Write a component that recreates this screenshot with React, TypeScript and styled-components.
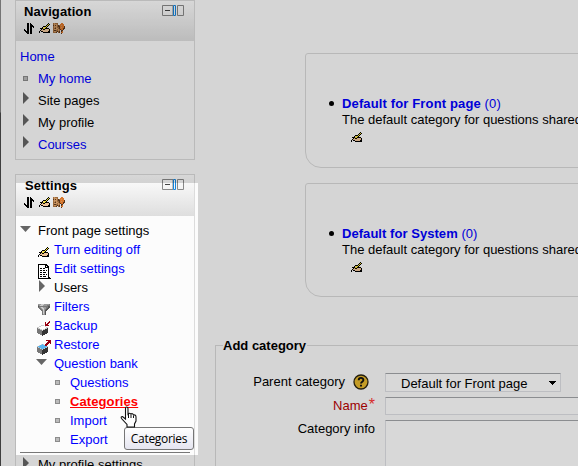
import React from 'react';
import styled, { createGlobalStyle } from 'styled-components';

const GlobalStyle = createGlobalStyle`
  html, body { margin: 0; padding: 0; height: 100%; overflow: hidden; }
  *, *::before, *::after { box-sizing: border-box; }
`;

const Page = styled.div`
  position: relative;
  display: flex;
  gap: 20px;
  width: 100%;
  height: 100vh;
  overflow: hidden;
  background: #fcfcfc;
  color: #000;
  font: 13px/15px 'Liberation Sans', Arial, sans-serif;
  white-space: nowrap;
`;

const Sidebar = styled.div`
  display: flex;
  flex: none;
  flex-direction: column;
  gap: 14px;
  width: 195px;
  padding-left: 14px;
  border-left: 1px solid;
  border-image: linear-gradient(#8a8a8a 0, #858585 112px, #4a4a4a 114px, #4a4a4a 100%) 1;
`;

const Block = styled.section<{ $height: number }>`
  flex: none;
  width: 180px;
  height: ${p => p.$height}px;
  border: 1px solid #dcdcdc;
`;

const BlockHeader = styled.header<{ $height: number }>`
  display: flex;
  justify-content: space-between;
  height: ${p => p.$height}px;
  padding: 3px 10px 0 8px;
  background: linear-gradient(#fefefe, #f3f3f3 35%, #dedede);
`;

const BlockTitle = styled.h2<{ $indent?: number }>`
  margin: 0 0 4px ${p => p.$indent || 0}px;
  font-size: 13px;
  line-height: 15px;
  letter-spacing: 0.1px;
`;

const Commands = styled.div`
  display: flex;
  gap: 3px;
  height: 12px;
`;

const Toggle = styled.svg`
  flex: none;
  margin-top: 1px;
`;

const Tree = styled.ul<{ $pad: number }>`
  margin: 0;
  padding: ${p => p.$pad}px 0 0;
  list-style: none;
`;

const TreeRow = styled.li<{ $height: number; $indent: number }>`
  display: flex;
  align-items: center;
  height: ${p => p.$height}px;
  padding-left: ${p => p.$indent}px;
`;

const IconSlot = styled.span<{ $width: number; $drop?: number }>`
  display: flex;
  flex: none;
  align-items: center;
  width: ${p => p.$width}px;
  height: 15px;
  padding-top: ${p => p.$drop || 0}px;
`;

const Label = styled.span<{ $link?: boolean; $active?: boolean }>`
  color: ${p => (p.$active ? '#f00' : p.$link ? '#00f' : '#000')};
  font-weight: ${p => (p.$active ? 'bold' : 'normal')};
  letter-spacing: ${p => (p.$active ? '0.1px' : 'normal')};
  text-decoration: ${p => (p.$active ? 'underline' : 'none')};
`;

const Rule = styled.li`
  height: 1px;
  margin: 3px 4px 2px;
  background: #777;
`;

const Square = styled.i`
  width: 5px;
  height: 5px;
  background: #bbb;
  border: 1px solid #8c8c8c;
`;

const Arrow = styled.svg<{ $lift: number }>`
  flex: none;
  margin-bottom: ${p => p.$lift}px;
`;

const Main = styled.main`
  flex: 1;
  min-width: 0;
  padding-top: 53px;
`;

const CategoryBox = styled.section<{ $height: number; $after: number }>`
  width: 320px;
  height: ${p => p.$height}px;
  margin: 0 0 ${p => p.$after}px 90px;
  padding: 42px 0 0 36px;
  border: 1px solid #dadada;
  border-radius: 3px 3px 3px 16px;
`;

const CategoryTitle = styled.div<{ $spacing: number }>`
  position: relative;
  height: 16px;
  color: #00f;
  letter-spacing: ${p => p.$spacing}px;
  &::before {
    content: '';
    position: absolute;
    left: -13px;
    top: 5px;
    width: 5px;
    height: 5px;
    border-radius: 50%;
    background: #000;
  }
`;

const CategoryText = styled.div`
  height: 20px;
`;

const EditLink = styled.div`
  padding-left: 9px;
  line-height: 0;
`;

const Form = styled.fieldset`
  width: 450px;
  height: 200px;
  min-width: 0;
  margin: 0;
  padding: 20px 0 0;
  border: 1px solid #dadada;
`;

const Legend = styled.legend`
  height: 15px;
  margin-left: 7px;
  padding: 0 1px 0 0;
  font-weight: bold;
`;

const Field = styled.div<{ $height: number }>`
  display: flex;
  gap: 10px;
  height: ${p => p.$height}px;
`;

const FieldLabel = styled.label<{ $required?: boolean; $right?: number }>`
  display: flex;
  flex: none;
  gap: ${p => (p.$required ? 1 : 8)}px;
  justify-content: flex-end;
  width: 159px;
  padding-right: ${p => p.$right || 0}px;
  padding-top: 1px;
  color: ${p => (p.$required ? '#b80000' : '#000')};
`;

const Star = styled.span`
  margin-top: -1px;
  color: #f33;
  font-size: 16px;
`;

const Control = styled.div<{ $width: number; $height: number }>`
  display: flex;
  flex: none;
  align-items: center;
  justify-content: space-between;
  width: ${p => p.$width}px;
  height: ${p => p.$height}px;
  padding: 1px 4px 0 15px;
  border: 1px solid #dfe1e6;
  border-top-color: #a5a7ab;
  border-radius: 1px;
  background: #fff;
`;

/* Leaves the settings block lit and shades the rest of the page. */
const Spotlight = styled.div`
  position: absolute;
  left: 16px;
  top: 183px;
  width: 182px;
  height: 272px;
  box-shadow: 0 0 0 1000px rgba(0, 0, 0, 0.152);
`;

const Tooltip = styled.div`
  position: absolute;
  left: 124px;
  top: 427px;
  width: 70px;
  height: 23px;
  border: 1px solid #767676;
  border-radius: 3px;
  background: linear-gradient(#fff, #e5e5f0);
  font: 12px/21px 'Open Sans', sans-serif;
  letter-spacing: -0.3px;
  text-align: center;
`;

const Pointer = styled.svg`
  position: absolute;
  left: 119px;
  top: 406px;
`;

const PALETTE: Record<string, string> = {
  K: '#000', Y: '#f2e23a', P: '#eec49a', B: '#9c6a3c', C: '#c99563',
  D: '#55351c', O: '#d9772c', W: '#fff', G: '#777', S: '#555',
  L: '#ccc', M: '#999', R: '#970010', U: '#59b5f0', N: '#333',
};

const Pixels = ({ rows }: { rows: string[] }) => (
  <svg width={rows[0].length} height={rows.length} shapeRendering="crispEdges">
    {rows.flatMap((row, y) =>
      [...row].map((c, x) =>
        PALETTE[c] ? <rect key={`${x}-${y}`} x={x} y={y} width="1" height="1" fill={PALETTE[c]} /> : null,
      ),
    )}
  </svg>
);

const MOVE = [
  '...KK.K.....',
  '...KK.KK....',
  '...KK.KKK...',
  '...KK.KKKK..',
  '...KK.KK.K..',
  '...KK.KK....',
  'K..KK.KK....',
  'KK.KK.KK....',
  '.KKKK.KK....',
  '..KKK.KK....',
  '...KK.KK....',
];
const HAND = [
  '.........K.',
  '........KYK',
  '.......KYK.',
  '....KKKYK..',
  '...KPYYK...',
  '.KKKYYKKKK.',
  '..KPKKPPPPK',
  '.KPPPPPPPPK',
  'K.KKPPPPPKK',
  'K...KKKKKKK',
];
const MASKS = [
  'BCBBB...OO..',
  'BCCCB..OOOO.',
  'DCDCBDBOCOO.',
  'BCCCBDDOOOOD',
  'BCBCBBDOCOOD',
  'BBDCCBDOOODD',
  'BCCCBCBDOOD.',
  'BDDBBCB.DD..',
  'BCCBDBD.DO..',
  'BBBD.BD.OO..',
  '........D...',
];
const DOC = [
  '.KKKKKKKKK....',
  '.KWWWWWWKKK...',
  '.KWWWWWWKWKK..',
  '.KWWWWWWKKKK..',
  '.KWKKWKKWWWK..',
  '.KWWWWWWWWWK..',
  '.KWKKWKKWKWK..',
  '.KWWWWWWWWWK..',
  '.KWKKWKKKWWK..',
  '.KWWWWWWWWWK..',
  '.KWKKWKKWKWK..',
  '.KWWWWWWWWWK..',
  '.KWKKWKKKWWK..',
  '.KWWWWWWWWWKK.',
  '.KKKKKKKKKKKKK',
];
const FUNNEL = [
  'MMMLLLMMMMMG',
  'GMLLLMMMMGGG',
  'SGGGGGGGGGSS',
  'GGMLLMMMGGSS',
  '.GGMLLMMGSS.',
  '..GGMLMGSS..',
  '...GGLMSS...',
  '....GLMS....',
  '....GLMS....',
  '....GLMS....',
  '....GMMS....',
];
const BACKUP = [
  '............R.',
  '........R..RR.',
  '........R.RR..',
  '........RRR...',
  '....LLL.RRRR..',
  '..LLWWWWL.....',
  'LLWWWWWWWLL...',
  'GLLWWWWWLLN...',
  'GGGLLWLLNNN...',
  'GGGGGLNNNNN...',
  'GGGGGNNNNNN...',
  'GGGGGNNNNNN...',
  '.GGGGNNNNN....',
  '...GGNNN......',
  '.....N........',
];
const RESTORE = [
  '.........RRRRR',
  '...........RRR',
  '..........RRRR',
  '.........RRR.R',
  '....LUL.RRR...',
  '..LUUUUURR....',
  'LUUUUUUUUUL...',
  'GLUUUUUUULN...',
  'GGGLUUULNNN...',
  'GGGGGLNNNNN...',
  'GGGGGNNNNNN...',
  'GGGGGNNNNNN...',
  '.GGGGNNNNN....',
  '...GGNNN......',
  '.....N........',
];

const Closed = () => (
  <Arrow $lift={4} width="6" height="12"><path d="M0 0L6 6L0 12Z" fill="#666" /></Arrow>
);
const Open = () => (
  <Arrow $lift={3} width="11" height="6"><path d="M0 0H11L5.5 6Z" fill="#666" /></Arrow>
);

const BlockHead = ({ title, height, indent }: { title: string; height: number; indent?: number }) => (
  <BlockHeader $height={height}>
    <div>
      <BlockTitle $indent={indent}>{title}</BlockTitle>
      <Commands>
        <Pixels rows={MOVE} />
        <Pixels rows={HAND} />
        <Pixels rows={MASKS} />
      </Commands>
    </div>
    <Toggle width="22" height="11" fill="none">
      <path d="M.5 .5H11V10.5H.5ZM15.5 .5H21.5V10.5H15.5Z" stroke="#888" />
      <path d="M3 5.5H8" stroke="#444" />
      <path d="M11.5 .5H13.5V10.5H11.5Z" stroke="#1585dc" />
    </Toggle>
  </BlockHeader>
);

type Item = {
  text: string; indent: number; slot: number; icon?: React.ReactNode;
  link?: boolean; active?: boolean; drop?: number;
};

const NAV: Item[] = [
  { text: 'Home', indent: 4, slot: 0, link: true },
  { text: 'My home', indent: 7, slot: 15, icon: <Square />, link: true },
  { text: 'Site pages', indent: 7, slot: 15, icon: <Closed /> },
  { text: 'My profile', indent: 7, slot: 15, icon: <Closed /> },
  { text: 'Courses', indent: 7, slot: 15, icon: <Closed />, link: true },
];

const SETTINGS: Item[] = [
  { text: 'Front page settings', indent: 4, slot: 18, icon: <Open /> },
  { text: 'Turn editing off', indent: 22, slot: 16, icon: <Pixels rows={HAND} />, link: true, drop: 5 },
  { text: 'Edit settings', indent: 21, slot: 17, icon: <Pixels rows={DOC} />, link: true, drop: 6 },
  { text: 'Users', indent: 23, slot: 15, icon: <Closed /> },
  { text: 'Filters', indent: 22, slot: 16, icon: <Pixels rows={FUNNEL} />, link: true, drop: 5 },
  { text: 'Backup', indent: 21, slot: 17, icon: <Pixels rows={BACKUP} />, link: true, drop: 6 },
  { text: 'Restore', indent: 21, slot: 17, icon: <Pixels rows={RESTORE} />, link: true, drop: 6 },
  { text: 'Question bank', indent: 20, slot: 18, icon: <Open />, link: true },
  { text: 'Questions', indent: 39, slot: 15, icon: <Square />, link: true },
  { text: 'Categories', indent: 39, slot: 15, icon: <Square />, link: true, active: true },
  { text: 'Import', indent: 39, slot: 15, icon: <Square />, link: true },
  { text: 'Export', indent: 39, slot: 15, icon: <Square />, link: true },
];

const Row = ({ item, height }: { item: Item; height: number }) => (
  <TreeRow $height={height} $indent={item.indent}>
    <IconSlot $width={item.slot} $drop={item.drop}>{item.icon}</IconSlot>
    <Label $link={item.link} $active={item.active}>{item.text}</Label>
  </TreeRow>
);

type CategoryProps = { name: string; height: number; after: number; spacing: number };

const Category = ({ name, height, after, spacing }: CategoryProps) => (
  <CategoryBox $height={height} $after={after}>
    <CategoryTitle $spacing={spacing}><b>{name}</b> (0)</CategoryTitle>
    <CategoryText>The default category for questions shared in context</CategoryText>
    <EditLink><Pixels rows={HAND} /></EditLink>
  </CategoryBox>
);

export default function App() {
  return (
    <Page>
      <GlobalStyle />
      <Sidebar>
        <Block $height={160}>
          <BlockHead title="Navigation" height={40} />
          <Tree $pad={4}>
            {NAV.map(item => <Row key={item.text} item={item} height={22} />)}
          </Tree>
        </Block>
        <Block $height={320}>
          <BlockHead title="Settings" height={41} indent={1} />
          <Tree $pad={5}>
            {SETTINGS.map(item => <Row key={item.text} item={item} height={19} />)}
            <Rule />
            <Row item={{ text: 'My profile settings', indent: 7, slot: 15, icon: <Closed /> }} height={19} />
          </Tree>
        </Block>
      </Sidebar>
      <Main>
        <Category name="Default for Front page" height={115} after={15} spacing={0.14} />
        <Category name="Default for System" height={114} after={41} spacing={0.05} />
        <Form>
          <Legend>Add category</Legend>
          <Field $height={24}>
            <FieldLabel $right={6}>
              Parent category
              <svg width="16" height="16">
                <circle cx="8" cy="8" r="7" fill="#e8b92e" stroke="#2b2410" strokeWidth="1.3" />
                <path d="M5.7 6.2C5.7 3.2 10.4 3.2 10.4 6C10.4 7.7 8 7.7 8 9.6M8 10.8V12.6" fill="none" stroke="#111" strokeWidth="1.9" />
              </svg>
            </FieldLabel>
            <Control $width={176} $height={19}>
              Default for Front page
              <svg width="8" height="4" shapeRendering="crispEdges"><path d="M0 0H8L4 4Z" /></svg>
            </Control>
          </Field>
          <Field $height={23}>
            <FieldLabel $required>Name<Star>*</Star></FieldLabel>
            <Control $width={240} $height={18} />
          </Field>
          <Field $height={80}>
            <FieldLabel>Category info</FieldLabel>
            <Control $width={240} $height={80} />
          </Field>
        </Form>
      </Main>
      <Spotlight />
      <Tooltip>Categories</Tooltip>
      <Pointer width="19" height="22">
        <path
          d="M6.5 2.5Q6.5 1 7.5 1Q9 1 9 2.5V8Q10 6.5 12 8Q13.5 7 14.5 9Q17 8.5 17 11V15L15.5 18V21H8V18.5L2.5 12.5Q1.5 10.5 3.5 10.5L6.5 13Z"
          fill="#fff" stroke="#111" strokeWidth="1.1"
        />
        <path d="M9.5 8V12M12 8.5V12M14.5 9.5V12" stroke="#111" fill="none" />
      </Pointer>
    </Page>
  );
}
